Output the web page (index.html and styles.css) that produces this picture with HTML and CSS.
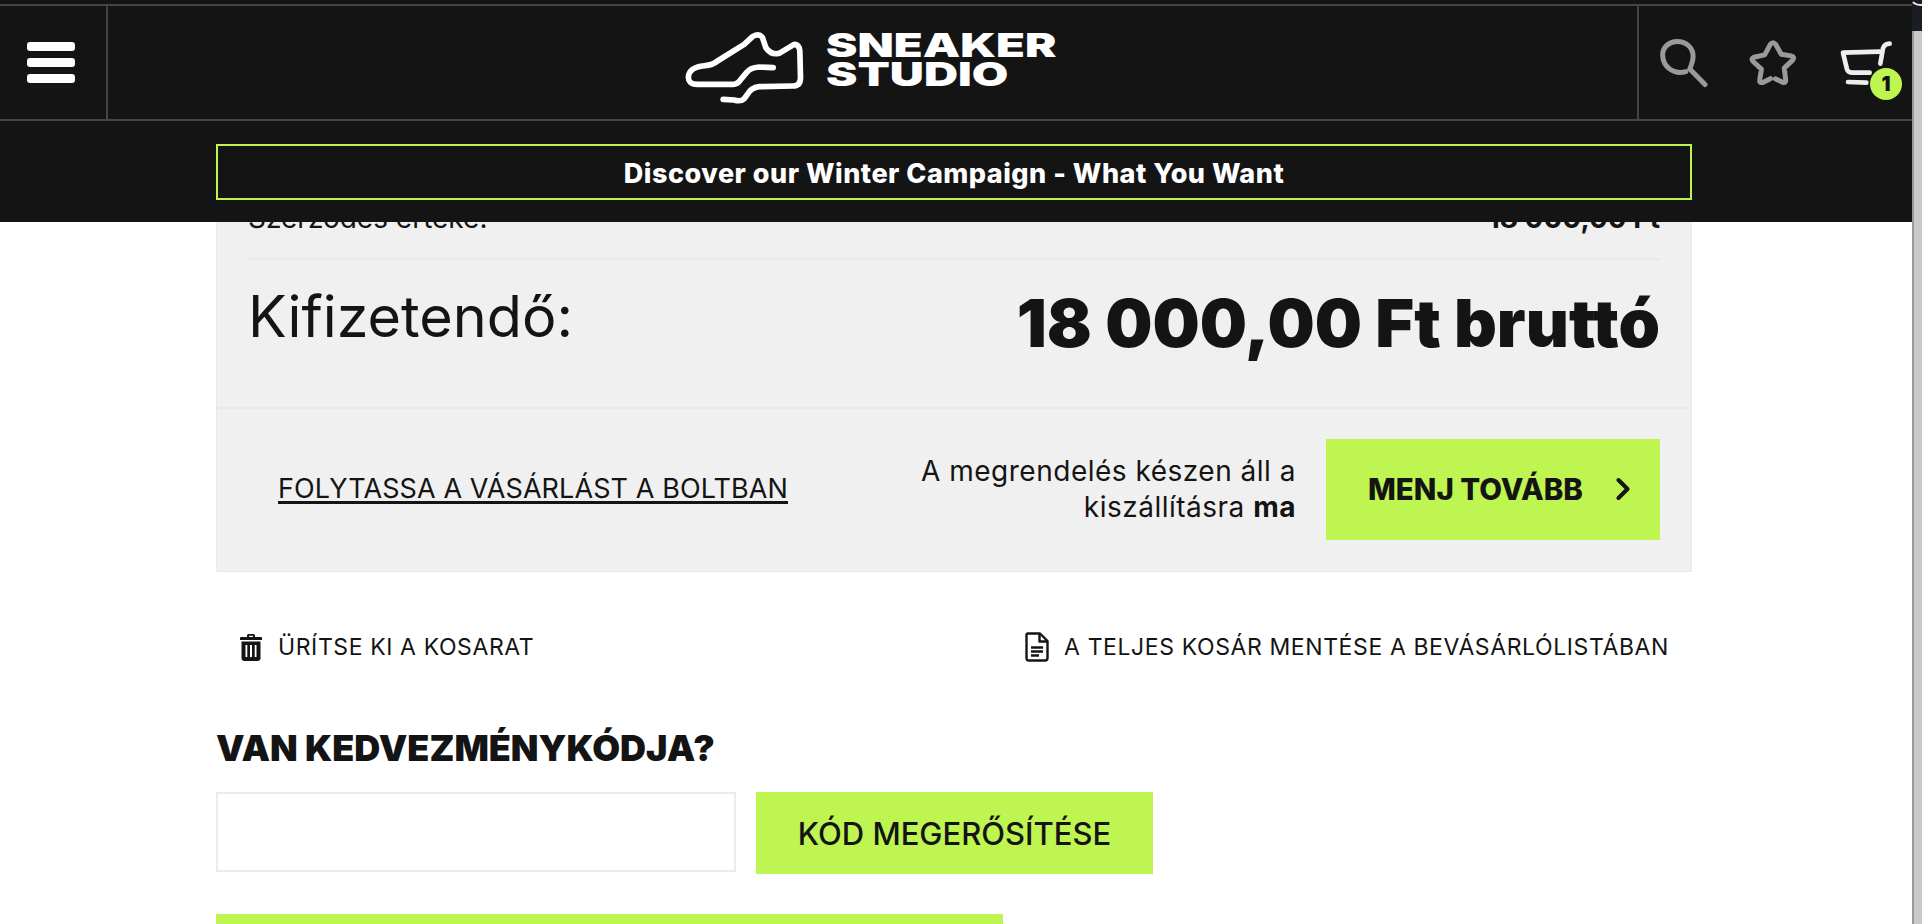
FILE: index.html
```html
<!DOCTYPE html>
<html lang="hu">
<head>
    <meta charset="UTF-8">
    <meta name="viewport" content="width=device-width, initial-scale=1.0">
    <title>Kosár - Sneaker Studio</title>
    <link rel="stylesheet" href="styles.css">
</head>
<body>

    <div class="page">
        <header class="site-header">
            <div class="header-bar">
                <button class="menu-btn" type="button" aria-label="Menü">
                    <span></span><span></span><span></span>
                </button>
                <a class="logo" href="#">
                    <svg class="logo-shoe" viewBox="75 45 365 225" fill="none" stroke="#fff" stroke-width="17" stroke-linecap="round" stroke-linejoin="round">
                        <path d="M342 155 L300 153 Q272 155 262 170 L245 190 Q235 205 222 205 L115 205 Q85 205 88 180 Q92 155 130 150 Q160 148 175 135 L255 85 L280 62 Q300 50 310 65 L320 95 Q335 118 360 112 L405 85 Q420 85 422 105 L424 185 Q424 210 400 210 L300 212 Q275 215 265 235 L255 248 Q245 258 225 252 L192 250"/>
                    </svg>
                    <span class="logo-text"><span>SNEAKER</span><span>STUDIO</span></span>
                </a>
                <div class="header-icons">
                    <a href="#" aria-label="Keresés">
                        <svg class="icon-search" viewBox="60 110 145 150" fill="none" stroke="#9a9a9a" stroke-width="15" stroke-linecap="round" stroke-linejoin="round">
                            <path d="M138 211 C100 222 68 195 68 160 C68 135 90 120 112 120 C140 120 160 140 160 165 C160 178 155 190 150 203 L196 250"/>
                        </svg>
                    </a>
                    <a href="#" aria-label="Kedvencek">
                        <svg class="icon-star" viewBox="328 115 144 136" fill="none" stroke="#9a9a9a" stroke-width="15" stroke-linecap="round" stroke-linejoin="round">
                            <path d="M407 232 L432 244 Q440 244 438 232 L434 200 L460 175 Q466 165 455 163 L425 158 L408 128 Q400 118 392 128 L375 160 L342 167 Q332 172 340 180 L365 203 L360 235 Q358 245 368 244 L392 232"/>
                        </svg>
                    </a>
                    <a class="cart-link" href="#" aria-label="Kosár">
                        <svg class="icon-cart" viewBox="595 120 165 132" fill="none" stroke="#eee" stroke-width="14" stroke-linecap="round" stroke-linejoin="round">
                            <path d="M722 188 L730 142 Q735 128 750 128"/>
                            <path d="M720 152 L610 155 L622 205 Q625 215 640 215 L690 215"/>
                            <path d="M625 243 L680 245"/>
                        </svg>
                        <span class="cart-badge">1</span>
                    </a>
                </div>
            </div>
            <div class="promo-wrap">
                <a class="promo" href="#">Discover our Winter Campaign - What You Want</a>
            </div>
        </header>

        <main class="content">
            <section class="summary">
                <div class="summary-body">
                    <div class="summary-row">
                        <span>Szerződés értéke:</span>
                        <strong>18 000,00 Ft</strong>
                    </div>
                    <div class="summary-total">
                        <span class="total-label">Kifizetendő:</span>
                        <strong class="total-price">18 000,00 Ft bruttó</strong>
                    </div>
                </div>
                <div class="summary-actions">
                    <a class="back-link" href="#">FOLYTASSA A VÁSÁRLÁST A BOLTBAN</a>
                    <p class="ready-note">A megrendelés készen áll a<br>kiszállításra <b>ma</b></p>
                    <a class="next-btn" href="#">
                        MENJ TOVÁBB
                        <svg viewBox="0 0 14 24" fill="none" stroke="#141414" stroke-width="4" stroke-linecap="round" stroke-linejoin="round"><path d="M2.5 3 L11.5 12 L2.5 21"/></svg>
                    </a>
                </div>
            </section>

            <div class="cart-tools">
                <a href="#">
                    <svg class="icon-trash" viewBox="0 0 22 27" fill="#141414">
                        <path d="M7 1.5 Q7 0 8.5 0 L13.5 0 Q15 0 15 1.5 L15 3 L21 3 Q22 3 22 4 L22 6 L0 6 L0 4 Q0 3 1 3 L7 3 Z M9 1.8 L9 3 L13 3 L13 1.8 Z"/>
                        <path d="M1.5 7.5 L20.5 7.5 L20.5 24 Q20.5 27 17.5 27 L4.5 27 Q1.5 27 1.5 24 Z M5.5 11 L5.5 23 L7.3 23 L7.3 11 Z M10 11 L10 23 L12 23 L12 11 Z M14.7 11 L14.7 23 L16.5 23 L16.5 11 Z" fill-rule="evenodd"/>
                    </svg>
                    ÜRÍTSE KI A KOSARAT
                </a>
                <a href="#">
                    <svg class="icon-doc" viewBox="0 0 24 30" fill="none" stroke="#141414" stroke-width="2.4" stroke-linejoin="round">
                        <path d="M3 1.5 L15 1.5 L22.5 9 L22.5 26 Q22.5 28.5 20 28.5 L4 28.5 Q1.5 28.5 1.5 26 L1.5 3 Q1.5 1.5 3 1.5 Z"/>
                        <path d="M14.5 1.5 L14.5 9.5 L22.5 9.5"/>
                        <path d="M6 15.5 L18 15.5 M6 19.5 L18 19.5 M6 23.5 L14 23.5"/>
                    </svg>
                    A TELJES KOSÁR MENTÉSE A BEVÁSÁRLÓLISTÁBAN
                </a>
            </div>

            <section class="coupon">
                <h3>VAN KEDVEZMÉNYKÓDJA?</h3>
                <form class="coupon-form">
                    <input type="text" aria-label="Kedvezménykód">
                    <button type="button">KÓD MEGERŐSÍTÉSE</button>
                </form>
                <div class="coupon-next"></div>
            </section>
        </main>
    </div>

    <div class="scrollbar">
        <svg class="scrollbar-corner" viewBox="0 0 10 6" fill="none" stroke="#e8e8e8" stroke-width="2"><path d="M1 1 Q3 4 10 4"/></svg>
        <div class="scrollbar-thumb"></div>
    </div>

</body>
</html>
```

FILE: styles.css
```css
* {
    box-sizing: border-box;
}
html, body {
    height: 100%;
}
body {
    margin: 0;
    display: flex;
    overflow: hidden;
    background-color: #ffffff;
    color: #141414;
    font-family: Inter, "Noto Sans", "Liberation Sans", sans-serif;
}
a {
    color: inherit;
    text-decoration: none;
}
.page {
    position: relative;
    flex: 1;
    min-width: 0;
    height: 924px;
    overflow: hidden;
}

/* header stays over the scrolled cart */
.site-header {
    position: absolute;
    top: 0;
    left: 0;
    right: 0;
    z-index: 10;
    height: 222px;
    padding-top: 4px;
    background-color: #141414;
}
.header-bar {
    display: flex;
    align-items: stretch;
    height: 117px;
    border-top: 2px solid #444444;
    border-bottom: 2px solid #444444;
}
.menu-btn {
    display: flex;
    flex-direction: column;
    justify-content: center;
    align-items: center;
    gap: 7px;
    width: 108px;
    padding: 0 5px 0 0;
    background: none;
    border: none;
    border-right: 2px solid #444444;
}
.menu-btn span {
    display: block;
    width: 48px;
    height: 9px;
    border-radius: 3px;
    background-color: #ffffff;
}
.logo {
    flex: 1;
    display: flex;
    align-items: center;
    justify-content: center;
    gap: 20px;
    padding-right: 5px;
}
.logo-shoe {
    width: 122px;
    height: 75px;
    margin-top: 12px;
}
.logo-text {
    display: flex;
    flex-direction: column;
    color: #ffffff;
    font-weight: 900;
    font-size: 33px;
    line-height: 29px;
    margin-top: -6px;
}
.logo-text span {
    display: block;
    width: 230px;
    transform: scaleX(1.43);
    transform-origin: left center;
}
.header-icons {
    display: flex;
    align-items: center;
    gap: 41px;
    width: 275px;
    padding-left: 21px;
    border-left: 2px solid #444444;
}
.header-icons a {
    display: block;
    position: relative;
    line-height: 0;
}
.icon-search {
    width: 48px;
    height: 50px;
}
.icon-star {
    width: 48px;
    height: 45px;
}
.icon-cart {
    width: 55px;
    height: 44px;
}
.cart-badge {
    position: absolute;
    right: -9px;
    top: 27px;
    width: 32px;
    height: 32px;
    border-radius: 50%;
    background-color: #bef551;
    color: #141414;
    font-size: 20px;
    font-weight: 900;
    line-height: 32px;
    text-align: center;
}
.promo-wrap {
    padding: 23px 220px 0 216px;
}
.promo {
    display: block;
    height: 56px;
    border: 2px solid #bef551;
    color: #ffffff;
    font-size: 27px;
    font-weight: 800;
    letter-spacing: 0.5px;
    line-height: 55px;
    text-align: center;
}

.content {
    width: 1476px;
    margin-left: 216px;
    padding-top: 193px;
}
.summary {
    background-color: #f0f0f0;
    border: 1px solid #e8e8e8;
}
.summary-body {
    padding: 0 31px;
}
.summary-row {
    display: flex;
    justify-content: space-between;
    align-items: center;
    height: 66px;
    padding-bottom: 16px;
    border-bottom: 2px solid #e9e9e9;
    font-size: 28px;
}
.summary-total {
    display: flex;
    justify-content: space-between;
    height: 147px;
    padding-top: 22px;
}
.total-label {
    font-size: 57.5px;
    line-height: 68px;
}
.total-price {
    font-size: 66.5px;
    font-weight: 900;
    line-height: 82px;
}
.summary-actions {
    display: flex;
    align-items: center;
    height: 164px;
    padding: 0 31px 2px 61px;
    border-top: 2px solid #e9e9e9;
}
.back-link {
    flex: 1;
    margin-top: -2px;
    font-size: 27px;
    letter-spacing: 0.1px;
    text-decoration: underline;
    text-decoration-thickness: 3px;
    text-underline-offset: 3px;
}
.ready-note {
    margin: 0 30px 0 0;
    font-size: 28px;
    letter-spacing: 0.5px;
    line-height: 36px;
    text-align: right;
}
.ready-note b {
    font-weight: 700;
}
.next-btn {
    display: flex;
    align-items: center;
    justify-content: space-between;
    width: 334px;
    height: 101px;
    padding: 0 30px 0 42px;
    background-color: #bef551;
    font-size: 29.5px;
    font-weight: 800;
}
.next-btn svg {
    width: 14px;
    height: 24px;
}

.cart-tools {
    display: flex;
    justify-content: space-between;
    align-items: center;
    height: 36px;
    margin-top: 57px;
    padding: 0 23px 0 24px;
    font-size: 23px;
    letter-spacing: 0.6px;
}
.cart-tools a {
    display: flex;
    align-items: center;
}
.icon-trash {
    width: 22px;
    height: 27px;
    margin-right: 16px;
}
.icon-doc {
    width: 24px;
    height: 30px;
    margin-right: 15px;
}

.coupon {
    margin-top: 61px;
}
.coupon h3 {
    margin: 0 0 22px;
    font-size: 36px;
    font-weight: 900;
    line-height: 44px;
}
.coupon-form {
    display: flex;
    align-items: flex-start;
    gap: 20px;
}
.coupon-form input {
    width: 520px;
    height: 80px;
    border: 2px solid #ebebeb;
    background-color: #ffffff;
}
.coupon-form button {
    width: 397px;
    height: 82px;
    padding: 0;
    border: none;
    background-color: #bef551;
    color: #141414;
    font-family: inherit;
    font-size: 31px;
    font-weight: 500;
}
.coupon-next {
    width: 787px;
    height: 80px;
    margin-top: 40px;
    background-color: #bef551;
}

.scrollbar {
    flex: none;
    width: 10px;
    height: 924px;
    padding-top: 31px;
    position: relative;
    background-color: #1a1d26;
}
.scrollbar-corner {
    position: absolute;
    top: 1px;
    left: 0;
    width: 10px;
    height: 6px;
}
.scrollbar-thumb {
    height: 100%;
    border-left: 2px solid #999999;
    background-color: #c9c9c9;
}
```
